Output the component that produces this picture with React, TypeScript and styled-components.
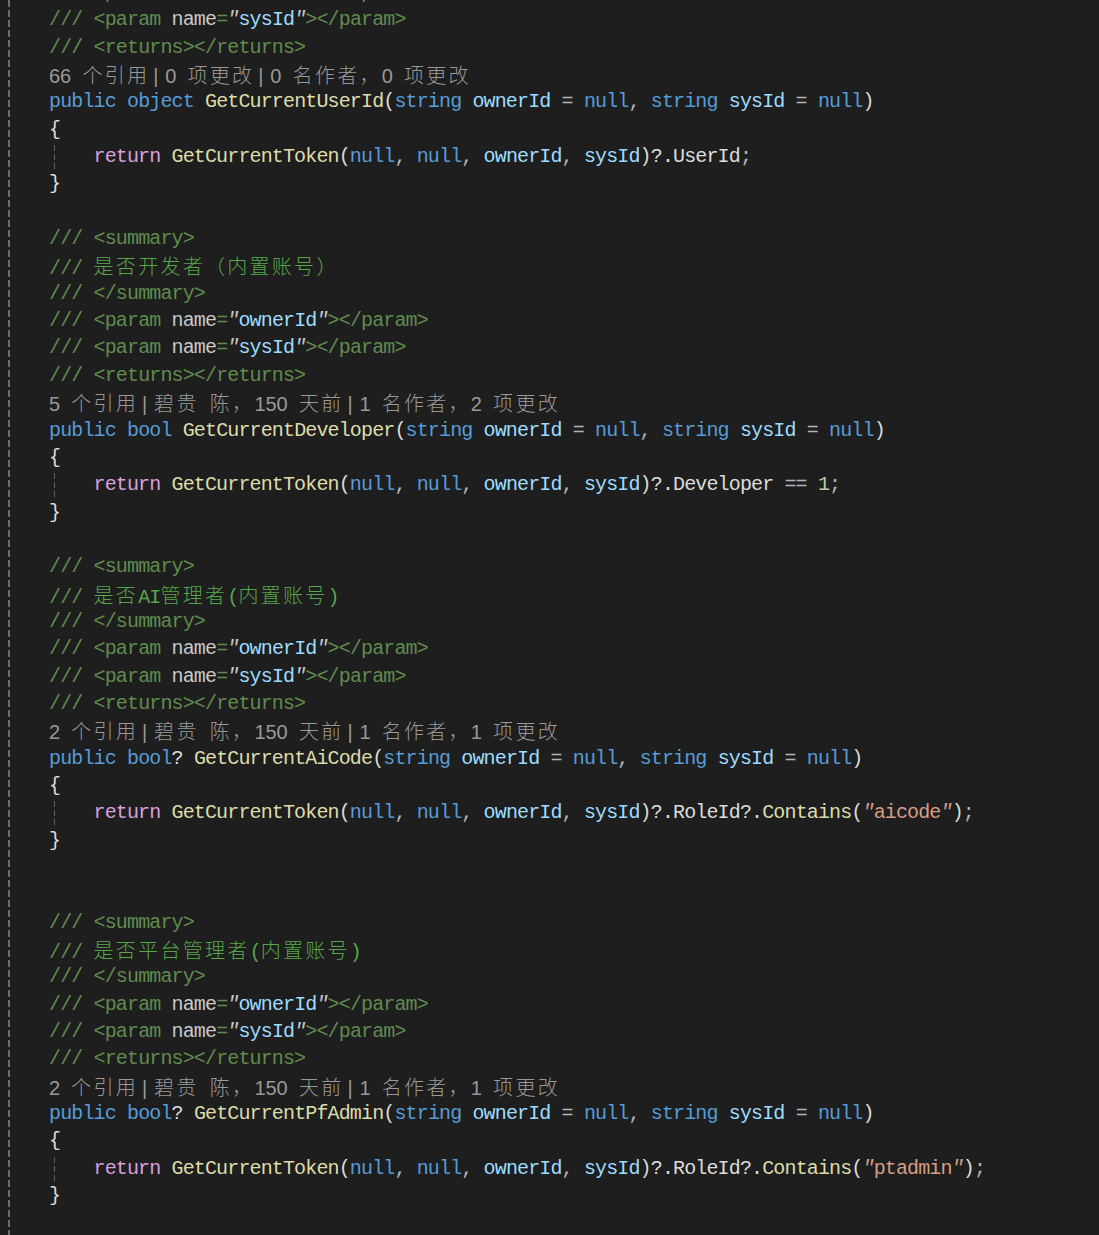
import React from 'react';
import styled, { createGlobalStyle } from 'styled-components';

const GlobalStyle = createGlobalStyle`
  html, body {
    margin: 0;
    padding: 0;
    background: #1e1e1e;
  }
  body {
    overflow: hidden;
  }
`;

const COLORS = {
  kw: '#569cd6',
  fn: '#dcdcaa',
  param: '#9cdcfe',
  ctl: '#d8a0df',
  str: '#d69d85',
  num: '#b5cea8',
  op: '#b4b4b4',
  punc: '#dcdcdc',
  prop: '#dcdcdc',
  docDelim: '#608b4e',
  docText: '#57a64a',
  docAttr: '#c8c8c8',
};

type Kind = keyof typeof COLORS;
type Seg = [Kind, string];
type LineDef =
  | { kind: 'code'; indent?: boolean; segs: Seg[] }
  | { kind: 'lens'; parts: string[] }
  | { kind: 'blank' };

const Page = styled.div`
  display: flex;
  min-height: 100vh;
  background: #1e1e1e;
  overflow: hidden;
`;

const Gutter = styled.div`
  flex: 0 0 49px;
  align-self: stretch;
  background-image: repeating-linear-gradient(
    to bottom,
    #6c6c6c 0,
    #6c6c6c 7px,
    transparent 7px,
    transparent 10px
  );
  background-size: 2px 100%;
  background-position: 8px 0;
  background-repeat: no-repeat;
`;

const Code = styled.div`
  display: flex;
  flex-direction: column;
  margin-top: -21px;
  flex: 1;
`;

const Line = styled.div`
  height: 27.35px;
  line-height: 27.35px;
  white-space: pre;
  font-family: 'Liberation Mono', 'Noto Sans CJK SC', monospace;
  font-size: 20px;
  letter-spacing: -0.86px;
  color: #dcdcdc;
`;

const LensLine = styled(Line)`
  font-family: 'Liberation Sans', 'Noto Sans CJK SC', sans-serif;
  letter-spacing: 0;
  word-spacing: 5.58px;
  color: #999999;
`;

const Tok = styled.span<{ $c: string }>`
  color: ${(p) => p.$c};
`;

const Quote = styled.span`
  font-style: italic;
`;

const Wide = styled.span`
  font-family: 'Noto Sans CJK SC', sans-serif;
  font-size: 20px;
  font-weight: 300;
  letter-spacing: 2.28px;
  word-spacing: 0;
`;

const Sep = styled.span`
  display: inline-block;
  width: 16px;
  padding-left: 4px;
  box-sizing: border-box;
  text-align: left;
`;

const Indent = styled.span`
  display: inline-block;
  width: 44.56px;
  height: 27.35px;
  vertical-align: top;
  background-image: repeating-linear-gradient(
    to bottom,
    #5e5e5e 0,
    #5e5e5e 6px,
    transparent 6px,
    transparent 9px
  );
  background-size: 1px 100%;
  background-position: 5px 2px;
  background-repeat: no-repeat;
`;

const SPLIT = /([\u3000-\u303f\u3400-\u9fff\uff00-\uffef]+|")/;
const CJK = /^[\u3000-\u303f\u3400-\u9fff\uff00-\uffef]+$/;

function renderText(text: string) {
  return text.split(SPLIT).map((part, i) => {
    if (!part) return null;
    if (part === '"') return <Quote key={i}>{part}</Quote>;
    if (CJK.test(part)) return <Wide key={i}>{part}</Wide>;
    return <React.Fragment key={i}>{part}</React.Fragment>;
  });
}

const docParam = (name: string): LineDef => ({
  kind: 'code',
  segs: [
    ['docDelim', '/// <param '],
    ['docAttr', 'name'],
    ['docDelim', '='],
    ['docAttr', '"'],
    ['param', name],
    ['docAttr', '"'],
    ['docDelim', '></param>'],
  ],
});
const docSummaryOpen: LineDef = { kind: 'code', segs: [['docDelim', '/// <summary>']] };
const docSummaryClose: LineDef = { kind: 'code', segs: [['docDelim', '/// </summary>']] };
const docReturns: LineDef = { kind: 'code', segs: [['docDelim', '/// <returns></returns>']] };
const docText = (t: string): LineDef => ({
  kind: 'code',
  segs: [
    ['docDelim', '/// '],
    ['docText', t],
  ],
});
const sig = (ret: Seg[], name: string): LineDef => ({
  kind: 'code',
  segs: [
    ['kw', 'public '],
    ...ret,
    ['fn', name],
    ['punc', '('],
    ['kw', 'string '],
    ['param', 'ownerId '],
    ['op', '= '],
    ['kw', 'null'],
    ['op', ', '],
    ['kw', 'string '],
    ['param', 'sysId '],
    ['op', '= '],
    ['kw', 'null'],
    ['punc', ')'],
  ],
});
const open: LineDef = { kind: 'code', segs: [['punc', '{']] };
const close: LineDef = { kind: 'code', segs: [['punc', '}']] };
const blank: LineDef = { kind: 'blank' };
const ret = (tail: Seg[]): LineDef => ({
  kind: 'code',
  indent: true,
  segs: [
    ['ctl', 'return '],
    ['fn', 'GetCurrentToken'],
    ['punc', '('],
    ['kw', 'null'],
    ['op', ', '],
    ['kw', 'null'],
    ['op', ', '],
    ['param', 'ownerId'],
    ['op', ', '],
    ['param', 'sysId'],
    ['punc', ')?.'],
    ...tail,
  ],
});
const lens = (...parts: string[]): LineDef => ({ kind: 'lens', parts });

const containsTail = (s: string): Seg[] => [
  ['prop', 'RoleId'],
  ['punc', '?.'],
  ['fn', 'Contains'],
  ['punc', '('],
  ['str', `"${s}"`],
  ['punc', ')'],
  ['op', ';'],
];

const LINES: LineDef[] = [
  docParam('ownerId'),
  docParam('sysId'),
  docReturns,
  lens('66 个引用', '0 项更改', '0 名作者，0 项更改'),
  sig([['kw', 'object ']], 'GetCurrentUserId'),
  open,
  ret([
    ['prop', 'UserId'],
    ['op', ';'],
  ]),
  close,
  blank,
  docSummaryOpen,
  docText('是否开发者（内置账号）'),
  docSummaryClose,
  docParam('ownerId'),
  docParam('sysId'),
  docReturns,
  lens('5 个引用', '碧贵 陈，150 天前', '1 名作者，2 项更改'),
  sig([['kw', 'bool ']], 'GetCurrentDeveloper'),
  open,
  ret([
    ['prop', 'Developer'],
    ['op', ' == '],
    ['num', '1'],
    ['op', ';'],
  ]),
  close,
  blank,
  docSummaryOpen,
  docText('是否AI管理者(内置账号)'),
  docSummaryClose,
  docParam('ownerId'),
  docParam('sysId'),
  docReturns,
  lens('2 个引用', '碧贵 陈，150 天前', '1 名作者，1 项更改'),
  sig(
    [
      ['kw', 'bool'],
      ['punc', '? '],
    ],
    'GetCurrentAiCode'
  ),
  open,
  ret(containsTail('aicode')),
  close,
  blank,
  blank,
  docSummaryOpen,
  docText('是否平台管理者(内置账号)'),
  docSummaryClose,
  docParam('ownerId'),
  docParam('sysId'),
  docReturns,
  lens('2 个引用', '碧贵 陈，150 天前', '1 名作者，1 项更改'),
  sig(
    [
      ['kw', 'bool'],
      ['punc', '? '],
    ],
    'GetCurrentPfAdmin'
  ),
  open,
  ret(containsTail('ptadmin')),
  close,
  blank,
];

function renderLine(line: LineDef, i: number) {
  if (line.kind === 'blank') return <Line key={i} />;
  if (line.kind === 'lens') {
    return (
      <LensLine key={i}>
        {line.parts.map((p, j) => (
          <React.Fragment key={j}>
            {j > 0 && <Sep>|</Sep>}
            {renderText(p)}
          </React.Fragment>
        ))}
      </LensLine>
    );
  }
  return (
    <Line key={i}>
      {line.indent && <Indent />}
      {line.segs.map(([k, t], j) => (
        <Tok key={j} $c={COLORS[k]}>
          {renderText(t)}
        </Tok>
      ))}
    </Line>
  );
}

export default function App() {
  return (
    <>
      <GlobalStyle />
      <Page>
        <Gutter />
        <Code>{LINES.map(renderLine)}</Code>
      </Page>
    </>
  );
}
